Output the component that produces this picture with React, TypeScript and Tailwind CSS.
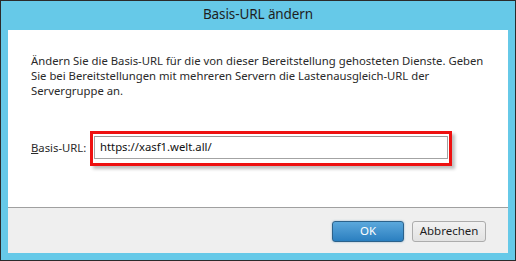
import React from "react";

const font = { fontFamily: '"Noto Sans", "Open Sans", sans-serif' };

export default function App() {
  return (
    <div
      className="flex h-[261px] w-[516px] flex-col border border-[#2b2b2b] bg-[#66c9e8] text-[#1e1e1e]"
      style={font}
    >
      <div className="flex h-[29px] shrink-0 items-center justify-center pb-[2px] text-[13.5px] tracking-[-0.1px]">
        Basis-URL ändern
      </div>
      <div className="mx-[7px] mb-[7px] flex flex-1 flex-col">
        <div className="flex-1 bg-white px-[23px] pt-[23px]">
          <p className="whitespace-nowrap text-[11.3px] leading-[15px] text-[#2a2a2a]">
            Ändern Sie die Basis-URL für die von dieser Bereitstellung gehosteten Dienste. Geben
            <br />
            Sie bei Bereitstellungen mit mehreren Servern die Lastenausgleich-URL der
            <br />
            Servergruppe an.
          </p>
          <div className="mt-[33px] flex items-center">
            <label className="w-[59px] whitespace-nowrap text-[11.3px] text-[#2a2a2a]">
              <span className="underline">B</span>asis-URL:
            </label>
            <div className="h-[35px] w-[362px] border-[3px] border-[#ee1111] px-[1px] pt-[2px] shadow-[3px_3px_3px_rgba(0,0,0,0.25)]">
              <div className="flex h-[23px] w-[354px] items-center border border-[#a3a3a3] border-t-[#9a9a9a] bg-white px-[5px] text-[11.3px] text-[#111]">
                https://xasf1.welt.all/
              </div>
            </div>
          </div>
        </div>
        <div className="flex h-[46px] shrink-0 items-center justify-end gap-[8px] border-t border-[#a0a0a0] bg-[#efefef] pr-[22px] pt-[1px]">
          <button className="h-[21px] w-[72px] rounded-[3px] border border-[#2c628b] bg-gradient-to-b from-[#5ba8dc] to-[#2a7fc0] text-[11.5px] text-white shadow-[0_0_2px_rgba(60,127,177,0.6)]">
            OK
          </button>
          <button className="h-[21px] w-[74px] rounded-[3px] border border-[#acacac] bg-gradient-to-b from-[#f2f2f2] to-[#e2e2e2] text-[11.5px] text-[#1e1e1e]">
            Abbrechen
          </button>
        </div>
      </div>
    </div>
  );
}
